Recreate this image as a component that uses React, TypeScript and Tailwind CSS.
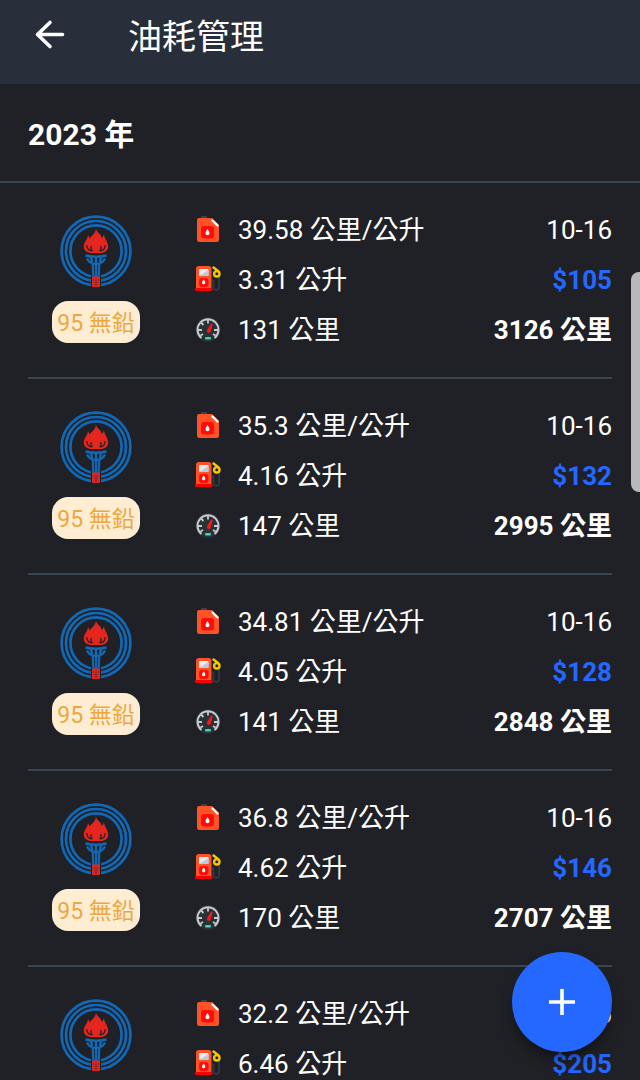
import { ReactNode } from "react";

type FuelRecord = {
  id: number;
  fuel: string;
  economy: string;
  volume: string;
  distance: string;
  date: string;
  cost: string;
  odometer: string;
};

const records: FuelRecord[] = [
  { id: 1, fuel: "95 無鉛", economy: "39.58", volume: "3.31", distance: "131", date: "10-16", cost: "$105", odometer: "3126" },
  { id: 2, fuel: "95 無鉛", economy: "35.3", volume: "4.16", distance: "147", date: "10-16", cost: "$132", odometer: "2995" },
  { id: 3, fuel: "95 無鉛", economy: "34.81", volume: "4.05", distance: "141", date: "10-16", cost: "$128", odometer: "2848" },
  { id: 4, fuel: "95 無鉛", economy: "36.8", volume: "4.62", distance: "170", date: "10-16", cost: "$146", odometer: "2707" },
  { id: 5, fuel: "95 無鉛", economy: "32.2", volume: "6.46", distance: "207", date: "10-16", cost: "$205", odometer: "2537" },
];

function StationLogo() {
  return (
    <svg viewBox="0 0 72 72" className="size-[72px]" fill="none" aria-hidden="true">
      <g stroke="#1168b5" strokeWidth="2.7">
        <circle cx="36" cy="36" r="34.4" />
        <circle cx="36" cy="36" r="30" />
        <circle cx="36" cy="36" r="25.6" />
      </g>
      <path d="M31 56h10v16H31z" fill="#202126" />
      {/* flame */}
      <path
        d="M36 13.500c.4 4 5.600 5.500 5.800 9.500 1-.8 1.800-2 2-4 .4 4 4.400 8.500 4.400 12.500 0 4-3.200 6.500-8.200 6.500h-8c-5 0-8.200-2.500-8.200-6.500 0-4.500 4-7 4.200-11.500.8 1 1.300 2.300 1.500 3.500 2-2.500 6-5 6.500-10z"
        fill="#e5261f"
      />
      <path
        d="M27 30c-.6 3 1.500 5.500 4.500 6M31.500 31c-1.200 2-.8 3.600 1 5M45 30c.6 3-1.500 5.500-4.500 6M40.500 31c1.200 2 .8 3.600-1 5"
        stroke="#202126"
        strokeWidth="1.200"
      />
      {/* torch */}
      <path d="M25.500 40.500c5 1.600 16 1.600 21 0M27 43.500c2 4 5 5.500 9 5.500s7-1.500 9-5.500" stroke="#1168b5" strokeWidth="2.400" />
      <path d="M31 42l1 5M36 41v7M41 42l-1 5" stroke="#1168b5" strokeWidth="2.400" />
      <path d="M32.700 48l.6 14M36 48v14M39.300 48l-.6 14" stroke="#1168b5" strokeWidth="2.200" />
      {/* seal */}
      <rect x="32" y="61.500" width="8" height="10.500" rx="1" fill="#e5261f" />
      <path d="M32 65h8M33.500 67.500h5M36 62.500v9M34 69.800h4" stroke="#8c2325" strokeWidth="0.8" />
    </svg>
  );
}

function CanIcon() {
  return (
    <svg viewBox="0 0 28 28" className="size-7" aria-hidden="true">
      <rect x="7" y="0" width="6" height="5" rx="1" fill="#39434c" />
      <path d="M5 2h13l7 7v14.500a2.500 2.500 0 0 1-2.500 2.500H5.500A2.500 2.500 0 0 1 3 23.500V4a2 2 0 0 1 2-2z" fill="#ff5226" />
      <path d="M18.500 4.500l5 5" stroke="#fff" strokeWidth="2.400" strokeLinecap="round" />
      <rect x="7" y="10" width="13" height="12.500" rx="3" fill="#ff0c08" />
      <path d="M13.500 13c1 1.600 2 2.800 2 4.200a2 2 0 0 1-4 0c0-1.400 1-2.600 2-4.200z" fill="#fff" />
    </svg>
  );
}

function PumpIcon() {
  return (
    <svg viewBox="0 0 28 28" className="size-7" fill="none" aria-hidden="true">
      <path d="M18 14.500h1.500V21a2.800 2.800 0 0 0 5.600 0V10" stroke="#303a43" strokeWidth="1.800" />
      <path d="M2 23V3a3 3 0 0 1 3-3h9.500a3 3 0 0 1 3 3v20z" fill="#ff5226" />
      <rect x="5" y="3" width="9.500" height="7" rx="1" fill="#e9edf2" />
      <path d="M5 10l9.500-6v6z" fill="#bccad9" />
      <rect x="5" y="12" width="9.500" height="9" rx="3" fill="#ff0c08" />
      <path d="M9.700 13.500c.8 1.200 1.600 2 1.600 3.200a1.600 1.600 0 0 1-3.200 0c0-1.200.8-2 1.600-3.200z" fill="#fff" />
      <rect x="1" y="22" width="17.500" height="3" rx="1" fill="#f40000" />
      <circle cx="22.800" cy="7.800" r="2.700" stroke="#f7c800" strokeWidth="2.400" />
      <path d="M19.500 1.500l4.500 3.500" stroke="#f7c800" strokeWidth="2.400" strokeLinecap="round" />
    </svg>
  );
}

function GaugeIcon() {
  return (
    <svg viewBox="0 0 28 28" className="size-7" fill="none" aria-hidden="true">
      <circle cx="14" cy="13.500" r="12.500" fill="#273239" />
      <path d="M7.500 22a10.500 10.500 0 1 1 13 0" stroke="#c9c8cd" strokeWidth="2" />
      <path
        d="M14 3.500v4M7 6.500l2.500 2.500M4 14h4M6.500 19.500l2.500-1.500M24 14h-4M21.500 19.500L19 18"
        stroke="#c9c8cd"
        strokeWidth="1.800"
      />
      <path d="M17.200 7.500l1.600.7-2.300 7.900a2 2 0 0 1-3.600-1.600z" fill="#fb1515" />
      <rect x="11" y="21" width="6" height="2.600" rx="1" fill="#45d3b4" />
    </svg>
  );
}

function Metric({ icon, children }: { icon: ReactNode; children: ReactNode }) {
  return (
    <div className="flex h-[50px] items-center gap-4">
      {icon}
      <span>{children}</span>
    </div>
  );
}

function RecordRow({ record }: { record: FuelRecord }) {
  return (
    <li className="mx-7 flex h-[196px] shrink-0 border-b-2 border-[#3a4752] text-[26px] leading-[50px]">
      <div className="flex w-[136px] flex-col items-center gap-3.5 pt-8">
        <StationLogo />
        <span className="flex h-[42px] items-center rounded-2xl bg-[#ffedd3] px-[5px] pt-1 text-[23px] text-[#eda73f]">
          {record.fuel}
        </span>
      </div>
      <div className="ml-[30px] flex-1 pt-[22px]">
        <Metric icon={<CanIcon />}>{record.economy} 公里/公升</Metric>
        <Metric icon={<PumpIcon />}>{record.volume} 公升</Metric>
        <Metric icon={<GaugeIcon />}>{record.distance} 公里</Metric>
      </div>
      <div className="pt-[22px] text-right">
        <p>{record.date}</p>
        <p className="font-bold text-[#2468ff]">{record.cost}</p>
        <p className="font-bold">{record.odometer} 公里</p>
      </div>
    </li>
  );
}

export default function App() {
  return (
    <div className="relative flex h-screen flex-col overflow-hidden bg-[#202126] font-[Roboto,'Noto_Sans_CJK_TC',sans-serif] text-white">
      <header className="flex h-[84px] shrink-0 items-start gap-[60px] bg-[#282e3a] pl-8">
        <button type="button" aria-label="返回" className="flex h-[70px] w-9 items-center justify-center">
          <svg viewBox="0 0 36 36" className="size-9" fill="none" stroke="#fff" strokeWidth="3.6" strokeLinecap="round" strokeLinejoin="round">
            <path d="M30.500 17.500H5.500M18 5.500l-12.500 12L18 29.500" />
          </svg>
        </button>
        <h1 className="text-[34px] leading-[74px]">油耗管理</h1>
      </header>

      <main className="flex min-h-0 flex-1 flex-col overflow-y-auto [scrollbar-width:none]">
        <h2 className="shrink-0 border-b-2 border-[#3a4752] px-7 pt-1 text-[30px] leading-[93px] font-bold">2023 年</h2>
        <ul className="flex flex-col">
          {records.map((record) => (
            <RecordRow key={record.id} record={record} />
          ))}
        </ul>
      </main>

      {/* scroll thumb */}
      <div className="absolute top-[272px] right-0 h-[220px] w-[9px] rounded-l-lg bg-[#b9b9ba]" />

      <button
        type="button"
        aria-label="新增"
        className="absolute right-7 bottom-7 flex size-[100px] items-center justify-center rounded-full bg-[#2468ff] shadow-lg shadow-black/40"
      >
        <svg viewBox="0 0 26 26" className="size-[26px]" stroke="#fff" strokeWidth="3.6">
          <path d="M13 0v26M0 13h26" />
        </svg>
      </button>
    </div>
  );
}
